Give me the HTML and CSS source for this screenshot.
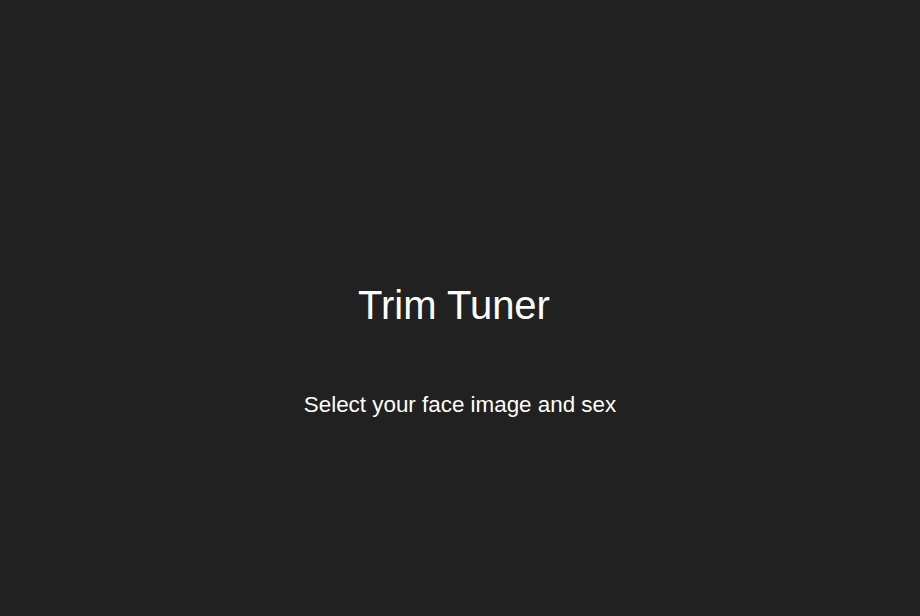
FILE: index.html
```html
<!DOCTYPE html>
<html lang="en">
<head>
<meta charset="utf-8">
<title>Trim Tuner</title>
<link rel="stylesheet" href="styles.css">
</head>
<body>
<main class="screen">
  <h1 class="title">Trim Tuner</h1>
  <p class="subtitle">Select your face image and sex</p>
</main>
</body>
</html>
```
FILE: styles.css
```css
html, body {
  margin: 0;
  padding: 0;
  background: #212121;
}
.screen {
  height: 616px;
  box-sizing: border-box;
  padding-top: 282px;
  display: flex;
  flex-direction: column;
  align-items: center;
  gap: 64px;
  font-family: "Liberation Sans", Arial, sans-serif;
  color: #ffffff;
}
.title {
  margin: 0;
  font-size: 40px;
  font-weight: 400;
  line-height: 46px;
  padding-right: 12px;
}
.subtitle {
  margin: 0;
  font-size: 22.4px;
  line-height: 25px;
}
```
